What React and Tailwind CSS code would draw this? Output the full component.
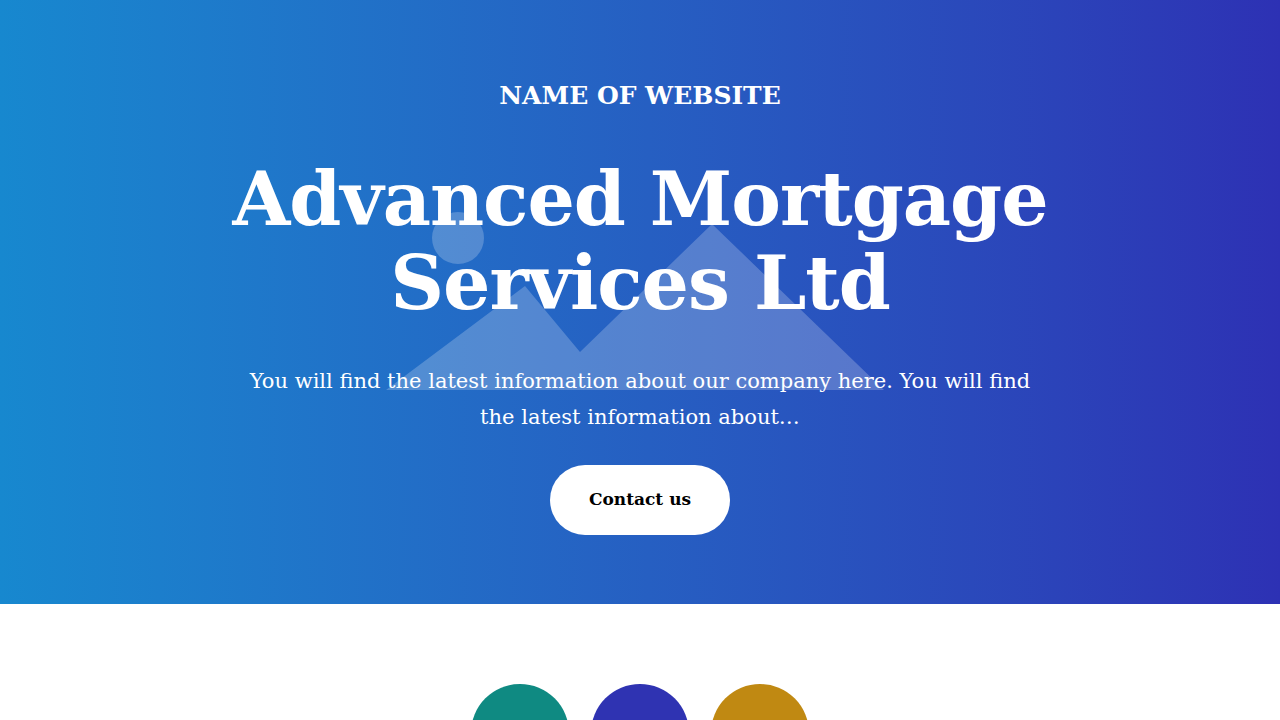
export default function App() {
    const circles = ["bg-[#0f8a82]", "bg-[#2f33b2]", "bg-[#c08912]"];

    return (
        <div className="min-h-screen bg-white" style={{ fontFamily: '"DejaVu Serif", "Liberation Serif", serif' }}>
            {/* Hero */}
            <section className="relative h-[604px] overflow-hidden bg-gradient-to-r from-[#1788cf] to-[#2d31b4] text-white">
                {/* placeholder picture behind the text */}
                <svg className="absolute inset-0 h-full w-full" viewBox="0 0 1280 604" aria-hidden="true">
                    <g fill="#ffffff" fillOpacity="0.22">
                        <circle cx="458" cy="238" r="26" />
                        <path d="M386 390 L525 286 L580 352 L712 224 L884 390 Z" />
                    </g>
                </svg>

                <div className="relative flex flex-col items-center pt-[77px] text-center">
                    <h2 className="text-[25px] font-bold leading-[38px]">NAME OF WEBSITE</h2>
                    <h1 className="mt-[42px] text-[74.5px] font-bold leading-[84px] tracking-[-1px]">
                        Advanced Mortgage
                        <br />
                        Services Ltd
                    </h1>
                    <p className="mt-[38px] w-[800px] text-[21px] leading-[36px]">
                        You will find the latest information about our company here. You will find the latest information about…
                    </p>
                    <button className="mt-[30px] h-[70px] w-[180px] rounded-full bg-white text-[17px] font-bold text-black">
                        Contact us
                    </button>
                </div>
            </section>

            {/* Features */}
            <section className="flex justify-center gap-[22px] pt-[80px]">
                {circles.map((c, i) => (
                    <div key={i} className={`h-[98px] w-[98px] rounded-full ${c}`} />
                ))}
            </section>
        </div>
    );
}
